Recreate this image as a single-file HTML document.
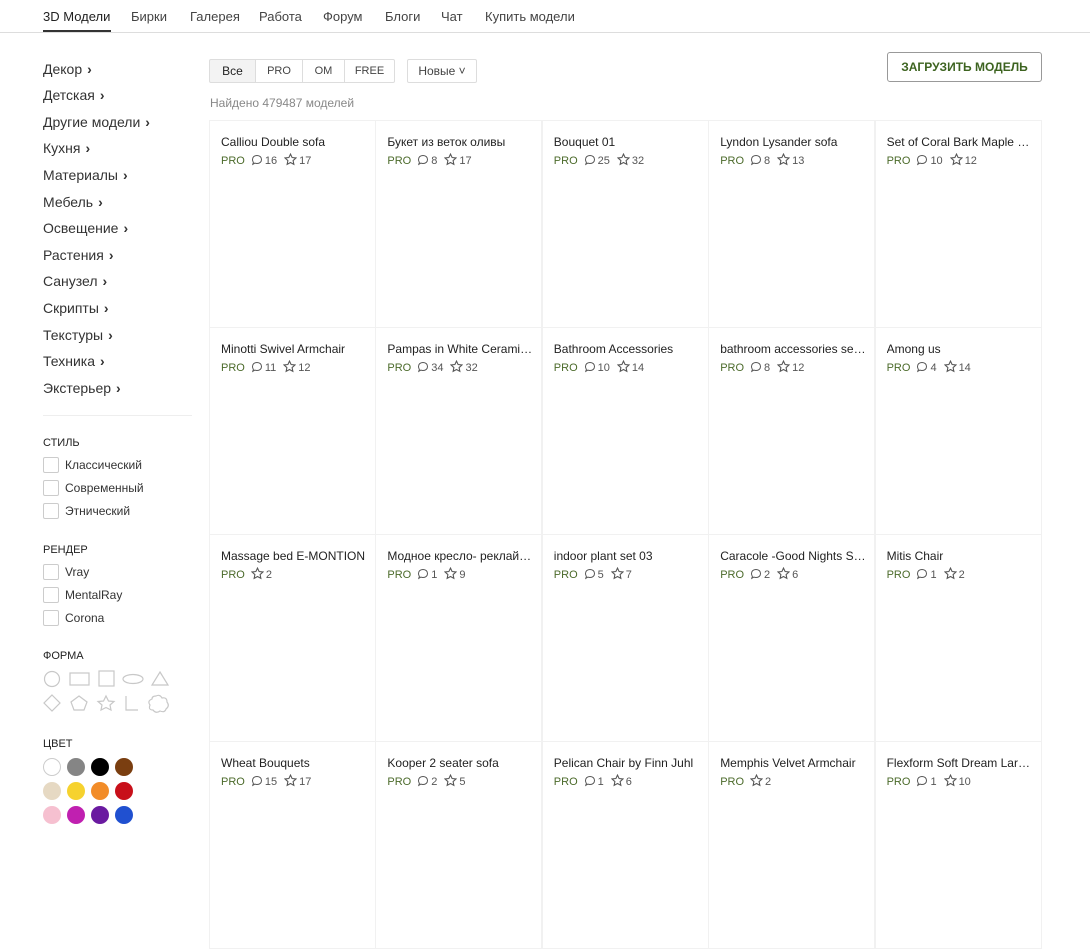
<!DOCTYPE html>
<html><head><meta charset="utf-8">
<style>
*{box-sizing:border-box;margin:0;padding:0}
body{width:1090px;height:817px;overflow:hidden;background:#fff;font-family:"Liberation Sans","Noto Sans CJK SC",sans-serif;color:#222;position:relative}
.nav{position:absolute;top:0;left:0;width:1090px;height:33px;border-bottom:1px solid #ddd}
.nav span{position:absolute;top:9px;font-size:13px;color:#444}
.nav .act{color:#222}
.nav .ul{position:absolute;left:43px;top:30px;width:68px;height:2px;background:#333}
.cat{position:absolute;left:43px;font-size:14px;color:#333}
.cat:after{content:"›";font-weight:bold;margin-left:5px}
.hr{position:absolute;left:43px;top:415px;width:149px;height:1px;background:#eee}
.h{position:absolute;left:43px;font-size:11px;color:#222}
.cb{position:absolute;left:43px;width:16px;height:16px;border:1px solid #ccc;border-radius:2px}
.cl{position:absolute;left:65px;font-size:12px;color:#333}
.dot{position:absolute;width:18px;height:18px;border-radius:50%}
.seg{position:absolute;top:59px;height:24px;border:1px solid #ddd;font-size:11px;color:#444;text-align:center;line-height:22px}
.card{position:absolute;width:167px;height:208px;border:1px solid #f1f1f1}
.t{position:absolute;left:11px;top:14px;font-size:12px;color:#222;white-space:nowrap;width:148px;overflow:hidden;text-overflow:ellipsis}
.m{position:absolute;left:11px;top:32px;font-size:11px;color:#555;white-space:nowrap}
.m b{font-weight:normal;color:#4b6a2a;margin-right:6px}
.m svg{vertical-align:-2px;margin-right:2px}
.m i{font-style:normal;margin-right:7px}
</style></head><body>
<div class="nav">
<span class="act" style="left:43px">3D Модели</span><span style="left:131px">Бирки</span><span style="left:190px">Галерея</span><span style="left:259px">Работа</span><span style="left:323px">Форум</span><span style="left:385px">Блоги</span><span style="left:441px">Чат</span><span style="left:485px">Купить модели</span>
<div class="ul"></div></div>

<div class="cat" style="top:61px">Декор</div>
<div class="cat" style="top:87px">Детская</div>
<div class="cat" style="top:114px">Другие модели</div>
<div class="cat" style="top:140px">Кухня</div>
<div class="cat" style="top:167px">Материалы</div>
<div class="cat" style="top:194px">Мебель</div>
<div class="cat" style="top:220px">Освещение</div>
<div class="cat" style="top:247px">Растения</div>
<div class="cat" style="top:273px">Санузел</div>
<div class="cat" style="top:300px">Скрипты</div>
<div class="cat" style="top:327px">Текстуры</div>
<div class="cat" style="top:353px">Техника</div>
<div class="cat" style="top:380px">Экстерьер</div>
<div class="hr"></div>

<div class="h" style="top:437px">СТИЛЬ</div>
<div class="cb" style="top:457px"></div><div class="cl" style="top:458px">Классический</div>
<div class="cb" style="top:480px"></div><div class="cl" style="top:481px">Современный</div>
<div class="cb" style="top:503px"></div><div class="cl" style="top:504px">Этнический</div>
<div class="h" style="top:544px">РЕНДЕР</div>
<div class="cb" style="top:564px"></div><div class="cl" style="top:565px">Vray</div>
<div class="cb" style="top:587px"></div><div class="cl" style="top:588px">MentalRay</div>
<div class="cb" style="top:610px"></div><div class="cl" style="top:611px">Corona</div>
<div class="h" style="top:650px">ФОРМА</div>
<svg style="position:absolute;left:40px;top:668px" width="140" height="48" fill="none" stroke="#c8c8c8" stroke-width="1.2">
<circle cx="12" cy="11" r="7.5"/><rect x="30" y="5" width="19" height="12"/><rect x="59" y="3" width="15" height="15"/><ellipse cx="93" cy="11" rx="10" ry="4.5"/><path d="M120 4 L128 17 L112 17 Z"/>
<path d="M12 27 L20 35 L12 43 L4 35 Z"/><path d="M39 28 L47 34 L44 42 L34 42 L31 34 Z"/><path d="M66 28 L68.5 33 L74 33.5 L70 37 L71 42 L66 39.5 L61 42 L62 37 L58 33.5 L63.5 33 Z"/><path d="M86 28 L86 42 L98 42"/><path d="M116 28 q4 -2 6 2 q5 -1 5 4 q3 4 -1 7 q-1 4 -6 2 q-4 3 -7 -1 q-5 0 -3 -5 q-3 -4 2 -6 q0 -3 4 -3z"/>
</svg>
<div class="h" style="top:738px">ЦВЕТ</div>
<div class="dot" style="left:43px;top:758px;border:1px solid #ccc"></div>
<div class="dot" style="left:67px;top:758px;background:#858585"></div>
<div class="dot" style="left:91px;top:758px;background:#000"></div>
<div class="dot" style="left:115px;top:758px;background:#7a3e10"></div>
<div class="dot" style="left:43px;top:782px;background:#e6d9c3"></div>
<div class="dot" style="left:67px;top:782px;background:#f6d22e"></div>
<div class="dot" style="left:91px;top:782px;background:#f28c28"></div>
<div class="dot" style="left:115px;top:782px;background:#c8101a"></div>
<div class="dot" style="left:43px;top:806px;background:#f6c0d0"></div>
<div class="dot" style="left:67px;top:806px;background:#c020b0"></div>
<div class="dot" style="left:91px;top:806px;background:#6a1aa0"></div>
<div class="dot" style="left:115px;top:806px;background:#2050d0"></div>

<div class="seg" style="left:209px;width:47px;background:#f3f3f3;color:#222;border-radius:2px 0 0 2px;font-size:12px">Все</div>
<div class="seg" style="left:255px;width:48px">PRO</div>
<div class="seg" style="left:302px;width:43px">OM</div>
<div class="seg" style="left:344px;width:51px;border-radius:0 2px 2px 0">FREE</div>
<div class="seg" style="left:407px;width:70px;font-size:12px;border-radius:2px">Новые ˅</div>
<div style="position:absolute;left:210px;top:96px;font-size:12px;color:#888">Найдено 479487 моделей</div>
<div style="position:absolute;left:887px;top:52px;width:155px;height:30px;border:1px solid #999;border-radius:3px;text-align:center;line-height:28px;font-size:12px;font-weight:bold;color:#3d6320">ЗАГРУЗИТЬ МОДЕЛЬ</div>

<div id="g"></div>
<script>
var d=[["Calliou Double sofa",16,17],["Букет из веток оливы",8,17],["Bouquet 01",25,32],["Lyndon Lysander sofa",8,13],["Set of Coral Bark Maple …",10,12],
["Minotti Swivel Armchair",11,12],["Pampas in White Cerami…",34,32],["Bathroom Accessories",10,14],["bathroom accessories se…",8,12],["Among us",4,14],
["Massage bed E-MONTION",null,2],["Модное кресло- реклай…",1,9],["indoor plant set 03",5,7],["Caracole -Good Nights Sl…",2,6],["Mitis Chair",1,2],
["Wheat Bouquets",15,17],["Kooper 2 seater sofa",2,5],["Pelican Chair by Finn Juhl",1,6],["Memphis Velvet Armchair",null,2],["Flexform Soft Dream Lar…",1,10]];
var c='<svg width="12" height="12" viewBox="0 0 12 12" fill="none" stroke="#555" stroke-width="1"><path d="M6 1.5c2.8 0 4.5 1.8 4.5 4s-1.7 4-4.5 4c-.8 0-1.5-.1-2.1-.4L1.8 10.3l.6-2C1.8 7.6 1.5 6.6 1.5 5.5c0-2.2 1.7-4 4.5-4z"/></svg>';
var s='<svg width="13" height="13" viewBox="0 0 12 12" fill="none" stroke="#555" stroke-width="1"><path d="M6 1l1.5 3.2 3.5.4-2.6 2.4.7 3.5L6 8.8 2.9 10.5l.7-3.5L1 4.6l3.5-.4z"/></svg>';
var h='';
d.forEach(function(x,i){var col=i%5,row=Math.floor(i/5);
h+='<div class="card" style="left:'+(209+col*166.4)+'px;top:'+(120+row*207)+'px"><div class="t">'+x[0]+'</div><div class="m"><b>PRO</b>'+(x[1]!=null?c+'<i>'+x[1]+'</i>':'')+s+x[2]+'</div></div>';});
document.getElementById('g').innerHTML=h;
</script>
</body></html>
